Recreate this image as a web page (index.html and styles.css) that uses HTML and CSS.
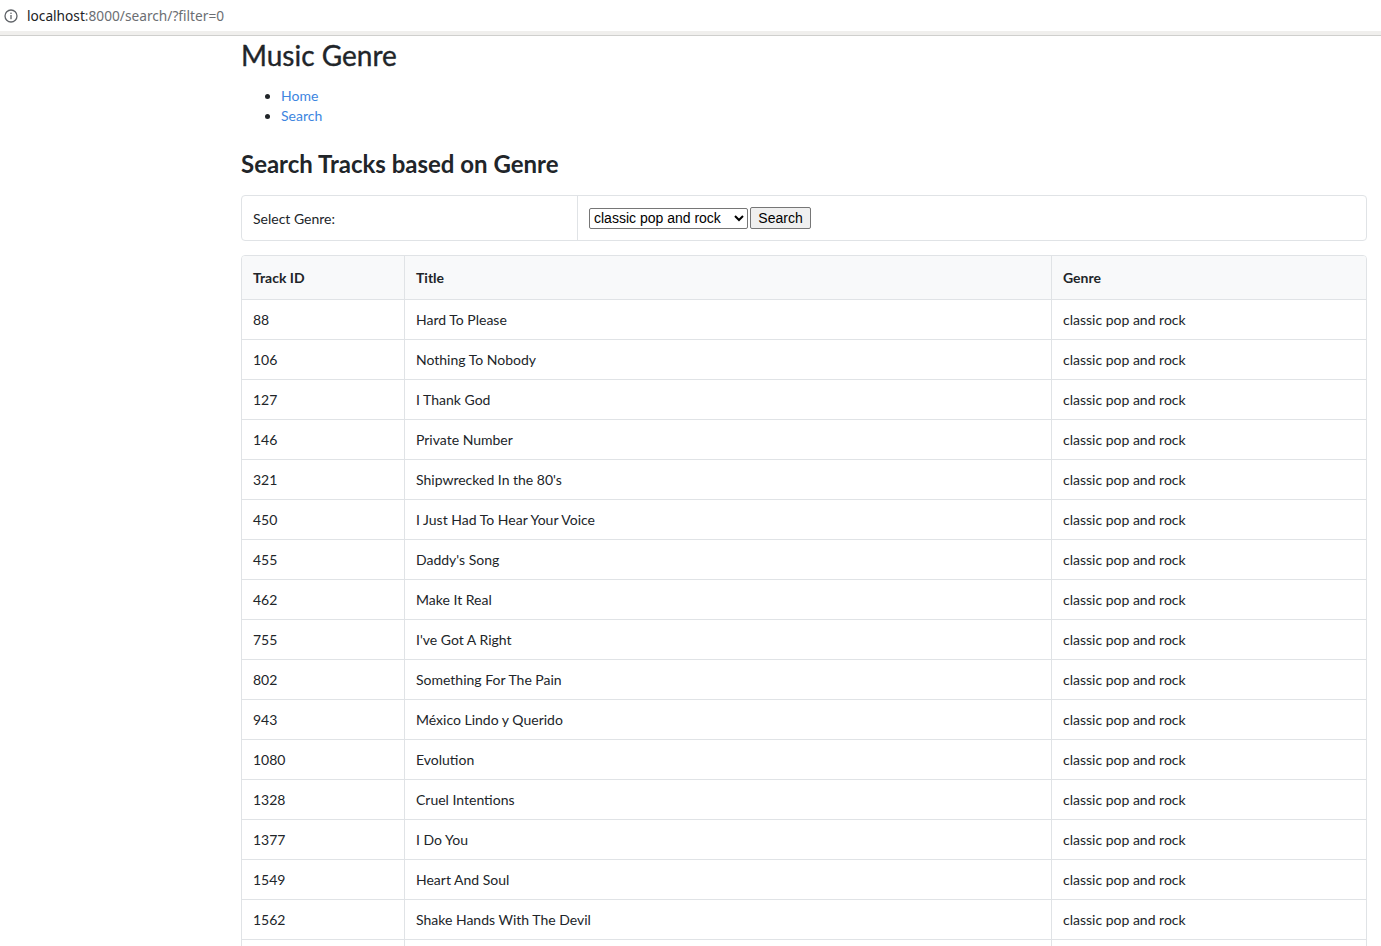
FILE: index.html
```html
<!DOCTYPE html>
<html lang="en">
<head>
<meta charset="utf-8">
<title>Music Genre</title>
<link rel="stylesheet" href="styles.css">
</head>
<body>
<div class="browserbar">
  <div class="addr">
    <svg class="info" width="14" height="14" viewBox="0 0 14 14" aria-hidden="true">
      <circle cx="7" cy="7" r="6" fill="none" stroke="#5f6368" stroke-width="1.3"/>
      <rect x="6.35" y="6" width="1.3" height="4.2" fill="#5f6368"/>
      <circle cx="7" cy="4.2" r="0.8" fill="#5f6368"/>
    </svg>
    <span class="host">localhost</span><span class="path">:8000/search/?filter=0</span>
  </div>
  <div class="strip"></div>
</div>
<main class="container">
  <h1 class="title">Music Genre</h1>
  <ul class="nav">
    <li><a href="#">Home</a></li>
    <li><a href="#">Search</a></li>
  </ul>
  <h2 class="subtitle">Search Tracks based on Genre</h2>
  <form class="filter">
    <div class="filter-label">Select Genre:</div>
    <div class="filter-control">
      <select class="genre-select">
        <option>classic pop and rock</option>
      </select><button type="button" class="search-btn">Search</button>
    </div>
  </form>
  <div class="table-wrap">
    <table class="tracks">
      <thead>
        <tr><th class="c-id">Track ID</th><th class="c-title">Title</th><th class="c-genre">Genre</th></tr>
      </thead>
      <tbody>
        <tr><td>88</td><td>Hard To Please</td><td>classic pop and rock</td></tr>
        <tr><td>106</td><td>Nothing To Nobody</td><td>classic pop and rock</td></tr>
        <tr><td>127</td><td>I Thank God</td><td>classic pop and rock</td></tr>
        <tr><td>146</td><td>Private Number</td><td>classic pop and rock</td></tr>
        <tr><td>321</td><td>Shipwrecked In the 80's</td><td>classic pop and rock</td></tr>
        <tr><td>450</td><td>I Just Had To Hear Your Voice</td><td>classic pop and rock</td></tr>
        <tr><td>455</td><td>Daddy's Song</td><td>classic pop and rock</td></tr>
        <tr><td>462</td><td>Make It Real</td><td>classic pop and rock</td></tr>
        <tr><td>755</td><td>I've Got A Right</td><td>classic pop and rock</td></tr>
        <tr><td>802</td><td>Something For The Pain</td><td>classic pop and rock</td></tr>
        <tr><td>943</td><td>México Lindo y Querido</td><td>classic pop and rock</td></tr>
        <tr><td>1080</td><td>Evolution</td><td>classic pop and rock</td></tr>
        <tr><td>1328</td><td>Cruel Intentions</td><td>classic pop and rock</td></tr>
        <tr><td>1377</td><td>I Do You</td><td>classic pop and rock</td></tr>
        <tr><td>1549</td><td>Heart And Soul</td><td>classic pop and rock</td></tr>
        <tr><td>1562</td><td>Shake Hands With The Devil</td><td>classic pop and rock</td></tr>
        <tr><td>&nbsp;</td><td>&nbsp;</td><td>&nbsp;</td></tr>
      </tbody>
    </table>
  </div>
</main>
</body>
</html>
```
FILE: styles.css
```css
html, body {
  margin: 0;
  padding: 0;
  background: #fff;
}
body {
  font-family: Lato, "Open Sans", sans-serif;
  font-size: 14px;
  line-height: 20px;
  color: #212529;
}
.browserbar {
  height: 36px;
  display: flex;
  flex-direction: column;
}
.addr {
  height: 31px;
  display: flex;
  align-items: center;
  padding-left: 4px;
  font-family: "Noto Sans", "DejaVu Sans", sans-serif;
  font-size: 13.7px;
  background: #fff;
}
.info {
  margin-right: 9px;
}
.host { color: #202124; }
.path { color: #6b6e72; }
.strip {
  height: 4px;
  background: #f0efed;
  border-bottom: 1px solid #cfcfcd;
}
.container {
  padding: 0 14px 0 241px;
}
.title {
  font-size: 28px;
  line-height: 34px;
  font-weight: 400;
  -webkit-text-stroke: 0.35px #212529;
  margin: 2px 0 14px;
}
.nav {
  margin: 0;
  padding-left: 40px;
}
.nav li { line-height: 20px; }
.nav a {
  color: #3d85e0;
  text-decoration: none;
}
.subtitle {
  font-size: 24px;
  line-height: 29px;
  font-weight: 700;
  margin: 23px 0 17px;
}
.filter {
  display: flex;
  height: 44px;
  border: 1px solid #e0e3e6;
  border-radius: 4px;
  margin: 0 0 14px;
}
.filter-label {
  width: 313px;
  padding: 2px 11px 0;
  border-right: 1px solid #e0e3e6;
  display: flex;
  align-items: center;
}
.filter-control {
  display: flex;
  align-items: center;
  padding-left: 11px;
}
.genre-select {
  font-family: "Liberation Sans", Arial, sans-serif;
  font-size: 14px;
  width: 159px;
  height: 21px;
  color: #000;
  background: #fff;
  border: 1px solid #767676;
  border-radius: 2px;
  margin: 0 2px 0 0;
}
.search-btn {
  font-family: "Liberation Sans", Arial, sans-serif;
  font-size: 14px;
  height: 22px;
  width: 61px;
  padding: 0;
  color: #000;
  background: #efefef;
  border: 1px solid #767676;
  border-radius: 2px;
}
.table-wrap {
  border: 1px solid #e0e3e6;
  border-radius: 4px;
  overflow: hidden;
}
.tracks {
  width: 100%;
  border-collapse: collapse;
  table-layout: fixed;
}
.tracks th, .tracks td {
  text-align: left;
  line-height: 20px;
  border-left: 1px solid #e0e3e6;
  border-top: 1px solid #e0e3e6;
}
.tracks th:first-child, .tracks td:first-child { border-left: 0; }
.tracks thead th {
  border-top: 0;
  padding: 12px 11px 11px;
  background: #f8f9fa;
  font-weight: 700;
}
.tracks td {
  padding: 10px 11px 9px;
}
.c-id { width: 140px; }
.c-title { width: 624px; }
```
